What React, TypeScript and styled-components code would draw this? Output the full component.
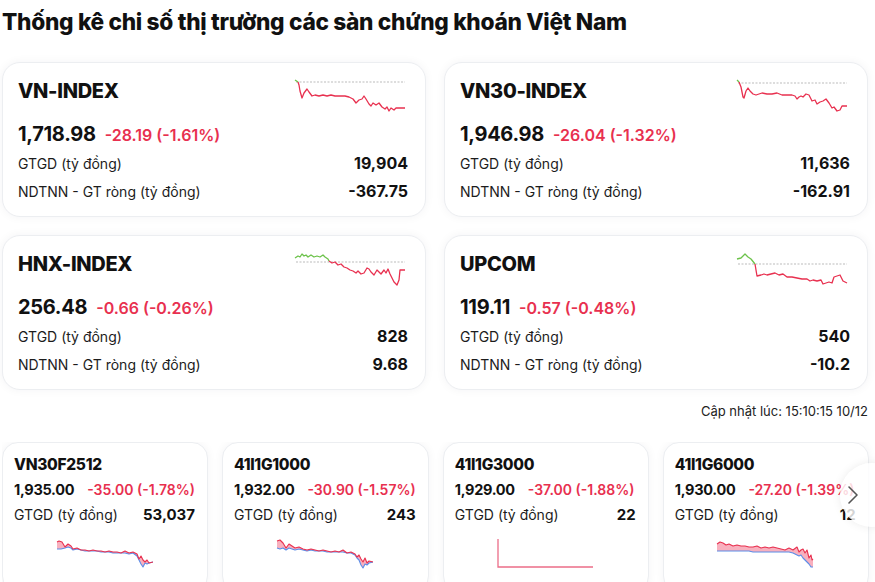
import React from "react";
import styled, { createGlobalStyle } from "styled-components";

const Global = createGlobalStyle`
  html, body { margin: 0; padding: 0; background: #ffffff; }
  body { font-family: Inter, "Noto Sans", "DejaVu Sans", sans-serif; color: #111; overflow: hidden; }
  * { box-sizing: border-box; }
`;

const RED = "#e8304f";
const GREEN = "#6cc24a";

const Page = styled.div`
  width: 875px;
  padding: 7px 7px 0 2px;
`;

const Title = styled.h1`
  margin: 0 0 26px 0;
  font-size: 22.7px;
  line-height: 29px;
  font-weight: 800;
  letter-spacing: -0.3px;
  white-space: nowrap;
`;

const Grid = styled.div`
  display: grid;
  grid-template-columns: 424px 424px;
  gap: 18px;
`;

const Card = styled.div`
  background: #fff;
  border: 1px solid #eceef1;
  border-radius: 18px;
  box-shadow: 0 0 10px rgba(20, 30, 50, 0.05);
  padding: 14px 17px 13px 15px;
  height: 155px;
`;

const Header = styled.div`
  display: flex;
  justify-content: space-between;
  align-items: flex-start;
  height: 36px;
`;

const IndexName = styled.div`
  margin-top: 2px;
  font-size: 20px;
  line-height: 24px;
  font-weight: 800;
  letter-spacing: -0.3px;
`;

const ChartBox = styled.svg<{ $mr?: number }>`
  display: block;
  margin-right: ${(p) => p.$mr ?? 3}px;
  overflow: visible;
`;

const PriceRow = styled.div<{ $small?: boolean }>`
  display: flex;
  align-items: baseline;
  white-space: nowrap;
  gap: ${(p) => (p.$small ? 13 : 9)}px;
  margin-top: ${(p) => (p.$small ? 0 : 8)}px;
  height: ${(p) => (p.$small ? 25 : 26)}px;
  line-height: ${(p) => (p.$small ? 25 : 26)}px;
`;

const Price = styled.span<{ $small?: boolean }>`
  font-size: ${(p) => (p.$small ? 14.5 : 20)}px;
  font-weight: 700;
  letter-spacing: -0.3px;
`;

const Change = styled.span<{ $small?: boolean }>`
  font-size: ${(p) => (p.$small ? 14 : 16)}px;
  font-weight: 600;
  color: ${RED};
`;

const StatRow = styled.div<{ $small?: boolean }>`
  display: flex;
  justify-content: space-between;
  align-items: center;
  white-space: nowrap;
  height: ${(p) => (p.$small ? 25 : 28)}px;
`;

const StatsBlock = styled.div`
  margin-top: 2px;
`;

const StatLabel = styled.span`
  font-size: 14px;
  color: #1c1c1c;
`;

const StatValue = styled.span<{ $small?: boolean }>`
  font-size: ${(p) => (p.$small ? 15 : 16)}px;
  font-weight: 700;
`;

const Updated = styled.div`
  text-align: right;
  font-size: 13px;
  line-height: 20px;
  color: #222;
  margin: 11px 0 21px 0;
`;

const CarouselWrap = styled.div`
  position: relative;
`;

const Carousel = styled.div`
  display: flex;
  gap: 14px;
  overflow: hidden;
  width: 873px;
  padding-bottom: 10px;
`;

const SmallCard = styled.div`
  flex: 0 0 206px;
  background: #fff;
  border: 1px solid #eceef1;
  border-radius: 16px;
  box-shadow: 0 0 10px rgba(20, 30, 50, 0.05);
  padding: 9px 12px 0 11px;
  height: 150px;
`;

const SmallName = styled.div`
  font-size: 15.5px;
  font-weight: 800;
  line-height: 25px;
  letter-spacing: -0.3px;
`;

const SmallChartRow = styled.div`
  display: flex;
  justify-content: center;
  margin-top: 11px;
`;

const NextButton = styled.button`
  position: absolute;
  top: 21px;
  right: -36px;
  width: 64px;
  height: 64px;
  border-radius: 50%;
  border: none;
  background: rgba(255, 255, 255, 0.82);
  box-shadow: 0 0 10px rgba(0, 0, 0, 0.08);
  padding: 0 0 0 7px;
  display: flex;
  align-items: center;
  justify-content: flex-start;
  cursor: pointer;
`;

type Pt = [number, number];
const pts = (a: Pt[]) => a.map((p) => p.join(",")).join(" ");

const Spark: React.FC<{ green: Pt[]; red: Pt[]; base: number }> = ({ green, red, base }) => (
  <ChartBox width={110} height={36} viewBox="0 0 110 36">
    <line x1={1} y1={base} x2={110} y2={base} stroke="#aaa" strokeWidth={0.8} strokeDasharray="2 1.5" />
    <polyline points={pts(green)} fill="none" stroke={GREEN} strokeWidth={1.3} strokeLinejoin="round" />
    <polyline points={pts(red)} fill="none" stroke={RED} strokeWidth={1.3} strokeLinejoin="round" />
  </ChartBox>
);

const AreaSpark: React.FC<{ top: Pt[]; bottom: Pt[] }> = ({ top, bottom }) => {
  const poly = pts([...top, ...[...bottom].reverse()]);
  return (
    <ChartBox $mr={0} width={96} height={32} viewBox="0 0 96 32">
      <polygon points={poly} fill="rgba(240,80,110,0.45)" />
      <polyline points={pts(bottom)} fill="none" stroke="#5b8de8" strokeWidth={1.1} strokeLinejoin="round" />
      <polyline points={pts(top)} fill="none" stroke={RED} strokeWidth={1.1} strokeLinejoin="round" />
    </ChartBox>
  );
};

const LSpark: React.FC = () => (
  <ChartBox $mr={0} width={96} height={32} viewBox="0 0 96 32">
    <polyline points="1,1 1,29 96,29" fill="none" stroke="#ec6d88" strokeWidth={1.3} />
  </ChartBox>
);

const indices = [
  {
    name: "VN-INDEX",
    price: "1,718.98",
    change: "-28.19 (-1.61%)",
    gtgd: "19,904",
    ndt: "-367.75",
    base: 5,
    green: [[0, 3], [3, 5]] as Pt[],
    red: [[3, 5], [4, 8], [5, 14], [7, 21], [9, 16], [12, 12], [14, 15], [17, 19], [20, 18], [24, 19], [28, 18], [32, 19], [36, 18], [40, 19], [45, 19], [50, 19], [54, 20], [58, 22], [61, 26], [64, 23], [67, 22], [69, 19], [71, 22], [74, 27], [76, 29], [78, 26], [81, 28], [84, 26], [87, 30], [90, 32], [92, 30], [94, 34], [96, 31], [99, 33], [101, 31], [104, 31], [110, 31]] as Pt[],
  },
  {
    name: "VN30-INDEX",
    price: "1,946.98",
    change: "-26.04 (-1.32%)",
    gtgd: "11,636",
    ndt: "-162.91",
    base: 6,
    green: [[0, 3], [2, 5]] as Pt[],
    red: [[2, 5], [4, 10], [6, 20], [7, 21], [9, 14], [11, 11], [13, 14], [16, 17], [19, 18], [22, 17], [25, 16], [30, 17], [35, 17], [40, 16], [45, 18], [50, 18], [55, 18], [58, 19], [60, 22], [62, 20], [64, 19], [66, 20], [69, 17], [72, 18], [75, 24], [78, 23], [80, 27], [83, 25], [86, 24], [89, 22], [92, 26], [95, 31], [97, 30], [100, 34], [103, 33], [105, 29], [110, 29]] as Pt[],
  },
  {
    name: "HNX-INDEX",
    price: "256.48",
    change: "-0.66 (-0.26%)",
    gtgd: "828",
    ndt: "9.68",
    base: 12,
    green: [[0, 8], [3, 6], [5, 7], [7, 4], [9, 6], [11, 5], [13, 7], [16, 5], [19, 7], [22, 6], [25, 7], [28, 5], [30, 7], [33, 9], [34, 11]] as Pt[],
    red: [[34, 11], [37, 13], [40, 12], [43, 15], [46, 14], [49, 17], [52, 18], [55, 20], [58, 21], [61, 23], [63, 21], [66, 24], [69, 23], [72, 18], [74, 19], [76, 22], [79, 25], [82, 20], [84, 22], [86, 24], [89, 20], [91, 23], [93, 19], [95, 24], [97, 28], [99, 32], [102, 35], [104, 30], [105, 20], [110, 20]] as Pt[],
  },
  {
    name: "UPCOM",
    price: "119.11",
    change: "-0.57 (-0.48%)",
    gtgd: "540",
    ndt: "-10.2",
    base: 14,
    green: [[0, 9], [4, 8], [8, 4], [11, 7], [14, 9], [18, 14]] as Pt[],
    red: [[18, 14], [20, 26], [24, 25], [27, 24], [30, 25], [34, 24], [38, 23], [42, 25], [46, 24], [50, 27], [55, 27], [60, 28], [65, 29], [70, 29], [73, 31], [76, 30], [80, 31], [84, 30], [86, 34], [89, 33], [92, 32], [95, 33], [97, 27], [100, 26], [103, 25], [106, 31], [110, 33]] as Pt[],
  },
];

const vn30fTop: Pt[] = [[0, 4], [2, 3], [5, 4], [8, 9], [11, 6], [14, 8], [16, 11], [20, 10], [24, 12], [28, 12], [32, 13], [36, 12], [40, 13], [44, 13], [48, 14], [52, 13], [56, 14], [60, 14], [64, 15], [68, 13], [72, 15], [76, 14], [80, 16], [82, 21], [84, 18], [86, 22], [88, 24], [90, 22], [92, 25], [96, 24]];
const vn30fBot: Pt[] = [[0, 11], [4, 11], [8, 10], [11, 9], [14, 10], [16, 12], [20, 11], [24, 12], [28, 13], [32, 13], [36, 13], [40, 13], [44, 14], [48, 14], [52, 14], [56, 15], [60, 15], [64, 15], [68, 15], [72, 16], [76, 15], [80, 18], [82, 22], [84, 26], [86, 29], [88, 25], [90, 26], [92, 25], [96, 24]];

const g1Top: Pt[] = [[0, 3], [3, 2], [6, 5], [9, 10], [12, 6], [15, 8], [18, 10], [22, 9], [26, 11], [30, 12], [34, 11], [38, 12], [42, 13], [46, 12], [50, 13], [54, 14], [58, 13], [62, 14], [66, 12], [70, 15], [74, 14], [78, 16], [80, 19], [82, 17], [84, 21], [86, 24], [88, 20], [90, 25], [92, 23], [96, 24]];
const g1Bot: Pt[] = [[0, 10], [3, 11], [6, 10], [9, 12], [12, 10], [15, 11], [18, 12], [22, 11], [26, 12], [30, 13], [34, 12], [38, 13], [42, 13], [46, 13], [50, 14], [54, 14], [58, 14], [62, 14], [66, 14], [70, 15], [74, 15], [78, 17], [80, 20], [82, 22], [84, 27], [86, 30], [88, 26], [90, 27], [92, 25], [96, 24]];

const g6Top: Pt[] = [[0, 6], [3, 4], [6, 5], [9, 7], [12, 6], [16, 8], [20, 7], [24, 8], [28, 8], [32, 9], [36, 9], [40, 8], [44, 10], [48, 9], [52, 10], [56, 9], [60, 10], [64, 11], [68, 12], [72, 10], [76, 12], [80, 9], [82, 14], [84, 12], [86, 11], [88, 15], [90, 12], [92, 20], [94, 17], [95, 22], [96, 21]];
const g6Bot: Pt[] = [[0, 13], [4, 13], [8, 13], [12, 13], [16, 13], [20, 13], [24, 13], [28, 13], [32, 13], [36, 14], [40, 14], [44, 14], [48, 14], [52, 14], [56, 14], [60, 14], [64, 14], [68, 14], [72, 14], [76, 15], [80, 17], [82, 18], [84, 17], [86, 20], [88, 22], [90, 24], [92, 26], [94, 29], [96, 29]];

const futures = [
  { name: "VN30F2512", price: "1,935.00", change: "-35.00 (-1.78%)", gtgd: "53,037", chart: <AreaSpark top={vn30fTop} bottom={vn30fBot} /> },
  { name: "41I1G1000", price: "1,932.00", change: "-30.90 (-1.57%)", gtgd: "243", chart: <AreaSpark top={g1Top} bottom={g1Bot} /> },
  { name: "41I1G3000", price: "1,929.00", change: "-37.00 (-1.88%)", gtgd: "22", chart: <LSpark /> },
  { name: "41I1G6000", price: "1,930.00", change: "-27.20 (-1.39%)", gtgd: "12", chart: <AreaSpark top={g6Top} bottom={g6Bot} /> },
];

export default function App() {
  return (
    <>
      <Global />
      <Page>
        <Title>Thống kê chi số thị trường các sàn chứng khoán Việt Nam</Title>
        <Grid>
          {indices.map((ix) => (
            <Card key={ix.name}>
              <Header>
                <IndexName>{ix.name}</IndexName>
                <Spark green={ix.green} red={ix.red} base={ix.base} />
              </Header>
              <PriceRow>
                <Price>{ix.price}</Price>
                <Change>{ix.change}</Change>
              </PriceRow>
              <StatsBlock>
                <StatRow>
                  <StatLabel>GTGD (tỷ đồng)</StatLabel>
                  <StatValue>{ix.gtgd}</StatValue>
                </StatRow>
                <StatRow>
                  <StatLabel>NDTNN - GT ròng (tỷ đồng)</StatLabel>
                  <StatValue>{ix.ndt}</StatValue>
                </StatRow>
              </StatsBlock>
            </Card>
          ))}
        </Grid>
        <Updated>Cập nhật lúc: 15:10:15 10/12</Updated>
        <CarouselWrap>
          <Carousel>
            {futures.map((f) => (
              <SmallCard key={f.name}>
                <SmallName>{f.name}</SmallName>
                <PriceRow $small>
                  <Price $small>{f.price}</Price>
                  <Change $small>{f.change}</Change>
                </PriceRow>
                <StatRow $small>
                  <StatLabel>GTGD (tỷ đồng)</StatLabel>
                  <StatValue $small>{f.gtgd}</StatValue>
                </StatRow>
                <SmallChartRow>{f.chart}</SmallChartRow>
              </SmallCard>
            ))}
          </Carousel>
          <NextButton aria-label="next">
            <svg width="12" height="20" viewBox="0 0 12 20">
              <polyline points="2,2 10,10 2,18" fill="none" stroke="#555" strokeWidth={1.6} strokeLinecap="round" strokeLinejoin="round" />
            </svg>
          </NextButton>
        </CarouselWrap>
      </Page>
    </>
  );
}
